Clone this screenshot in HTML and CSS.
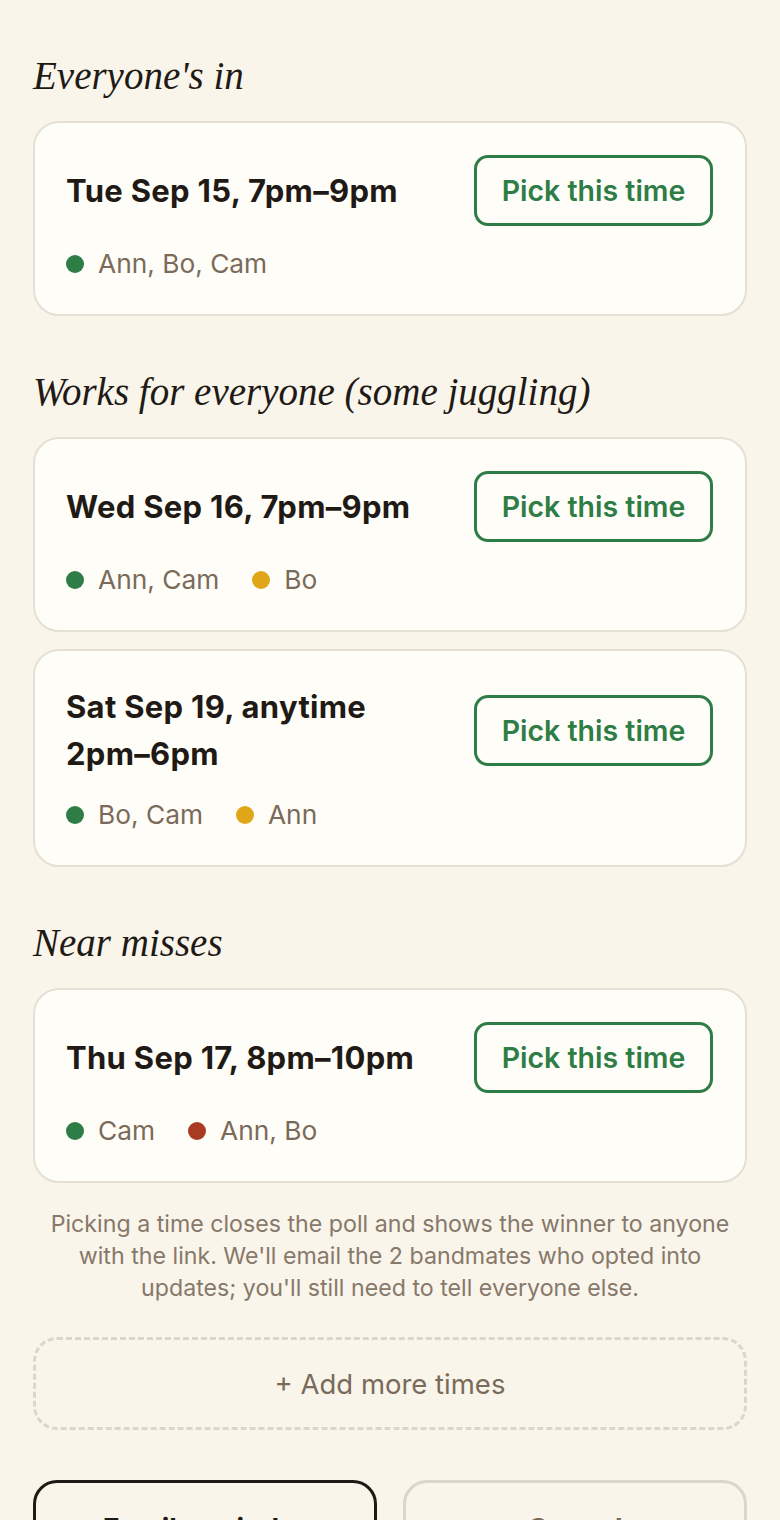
FILE: index.html
```html
<!DOCTYPE html>
<html lang="en">
<head>
<meta charset="utf-8">
<title>Pick a time</title>
<link rel="stylesheet" href="styles.css">
</head>
<body>
<main class="page">
  <h2 class="section-title">Everyone's in</h2>
  <div class="card">
    <div class="card-top">
      <div class="slot">Tue Sep 15, <span class="range">7pm–9pm</span></div>
      <button class="pick">Pick this time</button>
    </div>
    <div class="people">
      <span class="group"><span class="dot dot-yes"></span>Ann, Bo, Cam</span>
    </div>
  </div>

  <h2 class="section-title">Works for everyone (some juggling)</h2>
  <div class="card">
    <div class="card-top">
      <div class="slot">Wed Sep 16, <span class="range">7pm–9pm</span></div>
      <button class="pick">Pick this time</button>
    </div>
    <div class="people">
      <span class="group"><span class="dot dot-yes"></span>Ann, Cam</span>
      <span class="group"><span class="dot dot-maybe"></span>Bo</span>
    </div>
  </div>
  <div class="card card-next">
    <div class="card-top">
      <div class="slot">Sat Sep 19, anytime <span class="range">2pm–6pm</span></div>
      <button class="pick">Pick this time</button>
    </div>
    <div class="people">
      <span class="group"><span class="dot dot-yes"></span>Bo, Cam</span>
      <span class="group"><span class="dot dot-maybe"></span>Ann</span>
    </div>
  </div>

  <h2 class="section-title">Near misses</h2>
  <div class="card">
    <div class="card-top">
      <div class="slot">Thu Sep 17, <span class="range">8pm–10pm</span></div>
      <button class="pick">Pick this time</button>
    </div>
    <div class="people">
      <span class="group"><span class="dot dot-yes"></span>Cam</span>
      <span class="group"><span class="dot dot-no"></span>Ann, Bo</span>
    </div>
  </div>

  <p class="note">Picking a time closes the poll and shows the winner to anyone with the link. We'll email the 2 bandmates who opted into updates; you'll still need to tell everyone else.</p>

  <button class="add-more">+ Add more times</button>

  <div class="actions">
    <button class="action action-primary">Email reminder</button>
    <button class="action action-secondary">Cancel</button>
  </div>
</main>
</body>
</html>
```

FILE: styles.css
```css
* {
  box-sizing: border-box;
}

html, body {
  margin: 0;
  padding: 0;
  background: #f9f5eb;
}

body {
  font-family: Inter, "Liberation Sans", Arial, sans-serif;
  color: #1f1a15;
}

.page {
  padding: 53px 33px 40px;
  display: flex;
  flex-direction: column;
}

.section-title {
  margin: 53px 0 22px;
  font-family: "Liberation Serif", "Times New Roman", serif;
  font-style: italic;
  font-weight: 400;
  font-size: 39px;
  line-height: 46px;
  color: #1f1a15;
}

.section-title:first-child {
  margin-top: 0;
}

.card {
  background: #fffdf7;
  border: 2px solid #e5e0d5;
  border-radius: 26px;
  padding: 32px 32px 32px 31px;
}

.card-next {
  margin-top: 17px;
}

.card-top {
  display: flex;
  align-items: center;
  justify-content: space-between;
  gap: 24px;
}

.slot {
  flex: 1;
  font-size: 31px;
  line-height: 47px;
  font-weight: 700;
  letter-spacing: 0.3px;
  color: #1f1a15;
}

.range {
  white-space: nowrap;
}

.pick {
  flex: none;
  font-family: inherit;
  font-size: 28.5px;
  font-weight: 600;
  color: #2e7d46;
  background: transparent;
  border: 3px solid #2e7d46;
  border-radius: 14px;
  padding: 0 16px;
  height: 71px;
  width: 239px;
}

.people {
  margin-top: 20px;
  display: flex;
  gap: 33px;
  font-size: 26.3px;
  line-height: 36px;
  color: #7a6a5a;
}

.group {
  display: inline-flex;
  align-items: center;
  gap: 14px;
}

.dot {
  width: 18px;
  height: 18px;
  border-radius: 50%;
  display: inline-block;
}

.dot-yes { background: #2e7d46; }
.dot-maybe { background: #e0a619; }
.dot-no { background: #a83b22; }

.note {
  margin: 25px 10px 0;
  text-align: center;
  font-size: 23.2px;
  line-height: 32px;
  color: #87786a;
}

.add-more {
  margin-top: 33px;
  height: 93px;
  width: 100%;
  background: transparent;
  border: 3px dashed #dbd6cb;
  border-radius: 24px;
  font-family: inherit;
  font-size: 27.5px;
  color: #7a6a5a;
}

.actions {
  margin-top: 50px;
  display: grid;
  grid-template-columns: 1fr 1fr;
  gap: 26px;
}

.action {
  font-family: inherit;
  font-size: 28px;
  font-weight: 700;
  line-height: 36px;
  padding: 28px 20px;
  border-radius: 24px;
  background: transparent;
}

.action-primary {
  border: 3px solid #1f1a15;
  color: #1f1a15;
}

.action-secondary {
  border: 3px solid #dbd6cb;
  color: #7a6a5a;
}
```
